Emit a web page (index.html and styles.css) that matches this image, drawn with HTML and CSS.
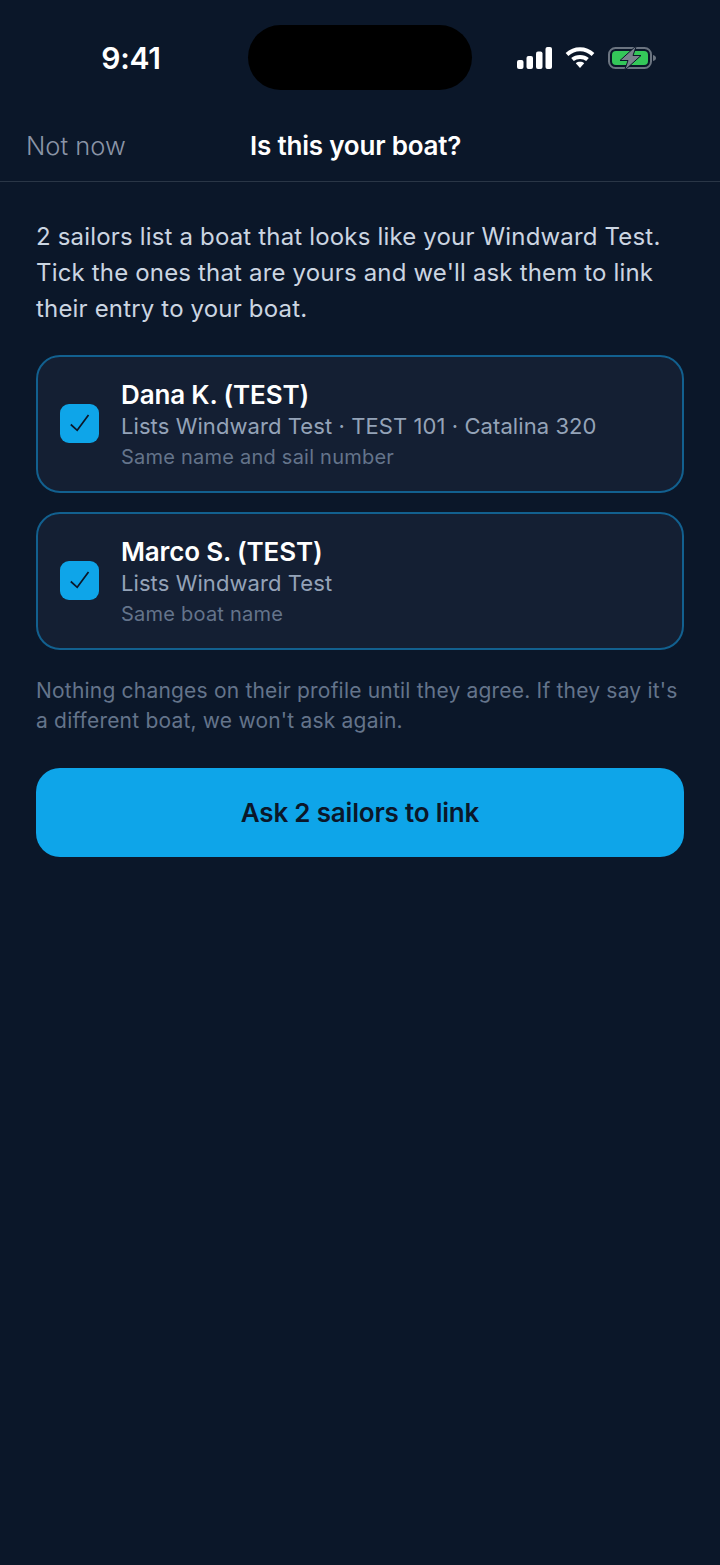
FILE: index.html
```html
<!DOCTYPE html>
<html lang="en">

<head>
    <meta charset="UTF-8">
    <meta name="viewport" content="width=device-width, initial-scale=1.0">
    <title>Is this your boat?</title>
    <link rel="stylesheet" href="styles.css">
</head>

<body>
    <div class="status-bar">
        <span class="time">9:41</span>
        <div class="island"></div>
        <div class="status-icons">
            <svg class="signal" width="35" height="22" viewBox="0 0 35 22">
                <rect x="0" y="13" width="6.500" height="9" rx="2" fill="#fff"/>
                <rect x="9.500" y="9" width="6.500" height="13" rx="2" fill="#fff"/>
                <rect x="19" y="4.500" width="6.500" height="17.500" rx="2" fill="#fff"/>
                <rect x="28.500" y="0" width="6.500" height="22" rx="2" fill="#fff"/>
            </svg>
            <svg class="wifi" width="30" height="22" viewBox="0 0 30 22">
                <path d="M2 7.500C9.500 0.500 20.500 0.500 28 7.500" fill="none" stroke="#fff" stroke-width="4"/>
                <path d="M7.500 12.500C11.500 9 18.500 9 22.500 12.500" fill="none" stroke="#fff" stroke-width="4"/>
                <path d="M10.800 16.200C13 14.400 17 14.400 19.200 16.200L15 21Z" fill="#fff"/>
            </svg>
            <svg class="battery" width="49" height="26" viewBox="0 0 49 26">
                <rect x="1" y="3" width="42" height="20" rx="6.500" fill="none" stroke="#6b7480" stroke-width="2"/>
                <rect x="4" y="6" width="36" height="14" rx="4" fill="#34c759"/>
                <path d="M45 10C47 10.500 48 11.500 48 13C48 14.500 47 15.500 45 16Z" fill="#6b7480"/>
                <path d="M28.500 0.500L12 15.500H20L16.500 25.500L33 10.500H25Z" fill="#7a828e" stroke="#0b1729" stroke-width="1"/>
            </svg>
        </div>
    </div>

    <header class="nav">
        <span class="nav-cancel">Not now</span>
        <h1 class="nav-title">Is this your boat?</h1>
    </header>

    <main class="content">
        <p class="intro">2 sailors list a boat that looks like your Windward Test. Tick the ones that are yours and we'll ask them to link their entry to your boat.</p>

        <div class="card">
            <div class="checkbox">
                <svg width="22" height="22" viewBox="0 0 22 22">
                    <path d="M1.800 12.500L8.200 18.300L19.500 3" fill="none" stroke="#0b1729" stroke-width="1.700"/>
                </svg>
            </div>
            <div class="card-text">
                <div class="card-name">Dana K. (TEST)</div>
                <div class="card-boat">Lists Windward Test · TEST 101 · Catalina 320</div>
                <div class="card-reason">Same name and sail number</div>
            </div>
        </div>

        <div class="card">
            <div class="checkbox">
                <svg width="22" height="22" viewBox="0 0 22 22">
                    <path d="M1.800 12.500L8.200 18.300L19.500 3" fill="none" stroke="#0b1729" stroke-width="1.700"/>
                </svg>
            </div>
            <div class="card-text">
                <div class="card-name">Marco S. (TEST)</div>
                <div class="card-boat">Lists Windward Test</div>
                <div class="card-reason">Same boat name</div>
            </div>
        </div>

        <p class="note">Nothing changes on their profile until they agree. If they say it's a different boat, we won't ask again.</p>

        <button class="primary-btn" type="button">Ask 2 sailors to link</button>
    </main>
</body>

</html>
```

FILE: styles.css
```css
/* page */
body {
    font-family: Inter, "Noto Sans", sans-serif;
    background-color: #0b1729;
    color: #fff;
    margin: 0;
    padding: 0;
    min-height: 1565px;
}

/* status bar */
.status-bar {
    height: 116px;
    display: flex;
    align-items: flex-start;
    box-sizing: border-box;
    padding-top: 25px;
}

.time {
    width: 248px;
    padding-top: 14px;
    text-align: center;
    padding-left: 14px;
    box-sizing: border-box;
    font-size: 30px;
    line-height: 38px;
    font-weight: 600;
    letter-spacing: -0.300px;
}

.island {
    width: 224px;
    height: 65px;
    background-color: #000;
    border-radius: 33px;
}

.status-icons {
    display: flex;
    align-items: center;
    gap: 13px;
    padding: 20px 0 0 45px;
}

/* nav */
.nav {
    height: 51px;
    border-bottom: 1px solid #2a3646;
    display: flex;
    align-items: flex-start;
    padding: 14px 26px 0;
}

.nav-cancel {
    width: 224px;
    font-size: 25.500px;
    line-height: 32px;
    color: #8a94a6;
    font-weight: 300;
}

.nav-title {
    margin: 0;
    font-size: 26px;
    line-height: 32px;
    font-weight: 600;
    letter-spacing: -0.200px;
}

/* content */
.content {
    padding: 37px 36px 0;
}

.intro {
    margin: 0 0 28px;
    font-size: 24px;
    line-height: 36px;
    letter-spacing: 0.170px;
    color: #cbd5e1;
}

.card {
    height: 138px;
    box-sizing: border-box;
    display: flex;
    align-items: center;
    gap: 22px;
    padding: 0 22px;
    margin-bottom: 19px;
    background-color: #141f33;
    border: 2px solid #12608f;
    border-radius: 24px;
}

.checkbox {
    width: 39px;
    height: 39px;
    margin-bottom: 2px;
    border-radius: 9px;
    background-color: #0ea5e9;
    display: flex;
    align-items: center;
    justify-content: center;
}

.card-text {
    padding-top: 4px;
}

.card-name {
    font-size: 26px;
    line-height: 32px;
    font-weight: 600;
    letter-spacing: -0.150px;
}

.card-boat {
    font-size: 22px;
    line-height: 30px;
    letter-spacing: 0.080px;
    color: #94a3b8;
}

.card-reason {
    font-size: 20px;
    line-height: 32px;
    letter-spacing: 0.230px;
    color: #64748b;
}

.note {
    margin: 26px 0 32px;
    font-size: 21px;
    line-height: 30px;
    letter-spacing: 0.200px;
    color: #64748b;
}

.primary-btn {
    display: block;
    width: 100%;
    height: 89px;
    border: none;
    border-radius: 24px;
    background-color: #0ea5e9;
    color: #0b1729;
    font-family: inherit;
    font-size: 26px;
    font-weight: 600;
    letter-spacing: -0.200px;
}
```
